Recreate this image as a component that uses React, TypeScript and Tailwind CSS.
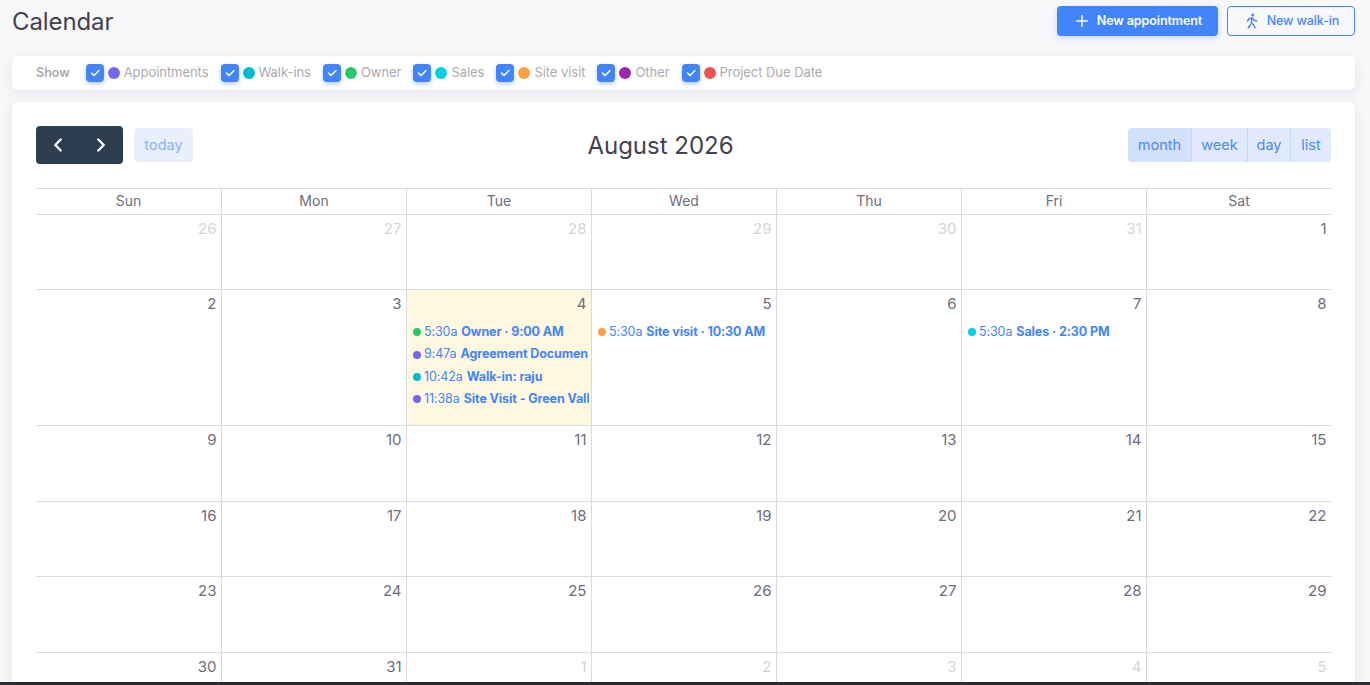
import { TbCheck, TbChevronLeft, TbChevronRight, TbPlus, TbWalk } from 'react-icons/tb';

type CalEvent = { color: string; time: string; title: string };
type Day = { n: number; muted?: boolean; today?: boolean; events?: CalEvent[] };

const filters = [
  { label: 'Appointments', color: 'bg-[#7367f0]' },
  { label: 'Walk-ins', color: 'bg-[#00bad1]' },
  { label: 'Owner', color: 'bg-[#28c76f]' },
  { label: 'Sales', color: 'bg-[#00cfe8]' },
  { label: 'Site visit', color: 'bg-[#ff9f43]' },
  { label: 'Other', color: 'bg-[#9c27b0]' },
  { label: 'Project Due Date', color: 'bg-[#ea5455]' },
];

const weekdays = ['Sun', 'Mon', 'Tue', 'Wed', 'Thu', 'Fri', 'Sat'];

const weeks: { height: string; days: Day[] }[] = [
  {
    height: 'h-[75px]',
    days: [
      { n: 26, muted: true },
      { n: 27, muted: true },
      { n: 28, muted: true },
      { n: 29, muted: true },
      { n: 30, muted: true },
      { n: 31, muted: true },
      { n: 1 },
    ],
  },
  {
    height: 'h-[136px]',
    days: [
      { n: 2 },
      { n: 3 },
      {
        n: 4,
        today: true,
        events: [
          { color: 'bg-[#28c76f]', time: '5:30a', title: 'Owner · 9:00 AM' },
          { color: 'bg-[#7367f0]', time: '9:47a', title: 'Agreement Documen' },
          { color: 'bg-[#00bad1]', time: '10:42a', title: 'Walk-in: raju' },
          { color: 'bg-[#7367f0]', time: '11:38a', title: 'Site Visit - Green Vall' },
        ],
      },
      { n: 5, events: [{ color: 'bg-[#ff9f43]', time: '5:30a', title: 'Site visit · 10:30 AM' }] },
      { n: 6 },
      { n: 7, events: [{ color: 'bg-[#00cfe8]', time: '5:30a', title: 'Sales · 2:30 PM' }] },
      { n: 8 },
    ],
  },
  { height: 'h-[76px]', days: [9, 10, 11, 12, 13, 14, 15].map((n) => ({ n })) },
  { height: 'h-[75px]', days: [16, 17, 18, 19, 20, 21, 22].map((n) => ({ n })) },
  { height: 'h-[76px]', days: [23, 24, 25, 26, 27, 28, 29].map((n) => ({ n })) },
  {
    height: 'h-[76px]',
    days: [
      { n: 30 },
      { n: 31 },
      { n: 1, muted: true },
      { n: 2, muted: true },
      { n: 3, muted: true },
      { n: 4, muted: true },
      { n: 5, muted: true },
    ],
  },
];

function EventRow({ event }: { event: CalEvent }) {
  return (
    <div className="flex h-[22.4px] items-center overflow-hidden whitespace-nowrap pl-[6px] text-[12.5px] tracking-[-0.1px] text-[#4285fa]">
      <span className={`mr-[3px] h-2 w-2 shrink-0 rounded-full ${event.color}`} />
      <span>{event.time}</span>
      <span className="ml-[4px] font-bold">{event.title}</span>
    </div>
  );
}

function DayCell({ day, first }: { day: Day; first: boolean }) {
  return (
    <div className={`min-w-0 overflow-hidden ${first ? '' : 'border-l border-[#dbdade]'} ${day.today ? 'bg-[#fff8e1]' : ''}`}>
      <div className={`pr-[4.5px] pt-[2px] text-right text-[15px] leading-[24px] ${day.muted ? 'text-[#d4d4d8]' : 'text-[#6f6b7d]'}`}>
        {day.n}
      </div>
      {day.events && (
        <div className="mt-[5px] pr-[2px]">
          {day.events.map((e) => (
            <EventRow key={e.time} event={e} />
          ))}
        </div>
      )}
    </div>
  );
}

export default function App() {
  return (
    <div className="flex h-[685px] flex-col overflow-hidden bg-[#f8f8fb] font-['Inter',sans-serif]">
      <div className="min-h-0 flex-1 overflow-hidden pl-3 pr-[15px]">
        {/* Header */}
        <div className="flex h-[56px] items-start justify-between">
          <h1 className="mt-[5px] text-[24px] leading-[34px] tracking-[-0.1px] text-[#444050]">Calendar</h1>
          <div className="mt-[6px] flex gap-[9px]">
            <button className="flex h-[30px] w-[161px] items-center justify-center gap-[6px] rounded bg-[#4285fa] text-[12.5px] font-semibold tracking-[-0.1px] text-white shadow-[0_2px_6px_rgba(66,133,250,0.3)]">
              <TbPlus className="h-[18px] w-[18px]" />
              New appointment
            </button>
            <button className="flex h-[30px] w-[128px] items-center justify-center gap-[6px] rounded border border-[#4285fa] text-[12.5px] font-medium tracking-[-0.1px] text-[#4285fa]">
              <TbWalk className="h-[18px] w-[18px]" />
              New walk-in
            </button>
          </div>
        </div>

        {/* Filters */}
        <div className="flex h-[34px] items-center rounded-md bg-white pl-6 shadow-[0_3px_12px_rgba(47,43,61,0.1)]">
          <span className="mr-[16px] text-[12.5px] font-semibold text-[#acaab1]">Show</span>
          <div className="flex items-center gap-[12px]">
            {filters.map((f) => (
              <label key={f.label} className="flex items-center">
                <span className="mr-[4px] flex h-[18px] w-[18px] items-center justify-center rounded-[4px] bg-[#4285fa] text-white shadow-[0_2px_4px_rgba(66,133,250,0.4)]">
                  <TbCheck className="h-3 w-3" strokeWidth={3} />
                </span>
                <span className={`mr-[4px] h-3 w-3 rounded-full ${f.color}`} />
                <span className="text-[13px] tracking-[-0.05px] text-[#acaab1]">{f.label}</span>
              </label>
            ))}
          </div>
        </div>

        {/* Calendar */}
        <div className="mt-3 rounded-md bg-white px-6 pt-6 pb-6 shadow-[0_3px_12px_rgba(47,43,61,0.1)]">
          <div className="flex h-[38px] items-center justify-between">
            <div className="flex items-center gap-[11px]">
              <div className="flex h-[38px] w-[87px] items-center justify-between rounded bg-[#2c3e50] pl-[11px] pr-[11px] text-white">
                <TbChevronLeft className="h-[22px] w-[22px]" strokeWidth={2.6} />
                <TbChevronRight className="h-[22px] w-[22px]" strokeWidth={2.6} />
              </div>
              <button className="flex h-[34px] w-[59px] items-center justify-center rounded bg-[#e9effd] text-[14.5px] text-[#8ab4fb]">
                today
              </button>
            </div>
            <h2 className="pt-[2px] text-[24px] leading-none text-[#444050]">August 2026</h2>
            <div className="flex h-[34px] overflow-hidden rounded bg-[#e0e9fe] text-[14.5px] text-[#4d89ef]">
              <span className="flex w-[64px] items-center justify-center border-r border-[#c3d7fb] bg-[#d1e0fc]">month</span>
              <span className="flex w-[56px] items-center justify-center border-r border-[#c3d7fb]">week</span>
              <span className="flex w-[43px] items-center justify-center border-r border-[#c3d7fb]">day</span>
              <span className="flex w-[40px] items-center justify-center">list</span>
            </div>
          </div>

          <div className="mt-[24px] border-t border-[#dbdade]">
            <div className="grid h-[25px] grid-cols-7">
              {weekdays.map((d, i) => (
                <div
                  key={d}
                  className={`flex items-center justify-center pb-[2px] text-[14px] text-[#6f6b7d] ${i ? 'border-l border-[#dbdade]' : ''}`}
                >
                  {d}
                </div>
              ))}
            </div>
            {weeks.map((w) => (
              <div key={w.days[0].n} className={`grid grid-cols-7 border-t border-[#dbdade] ${w.height}`}>
                {w.days.map((d, i) => (
                  <DayCell key={i} day={d} first={i === 0} />
                ))}
              </div>
            ))}
          </div>
        </div>
      </div>
      <div className="h-[3px] shrink-0 bg-[#2b2c30]" />
    </div>
  );
}
